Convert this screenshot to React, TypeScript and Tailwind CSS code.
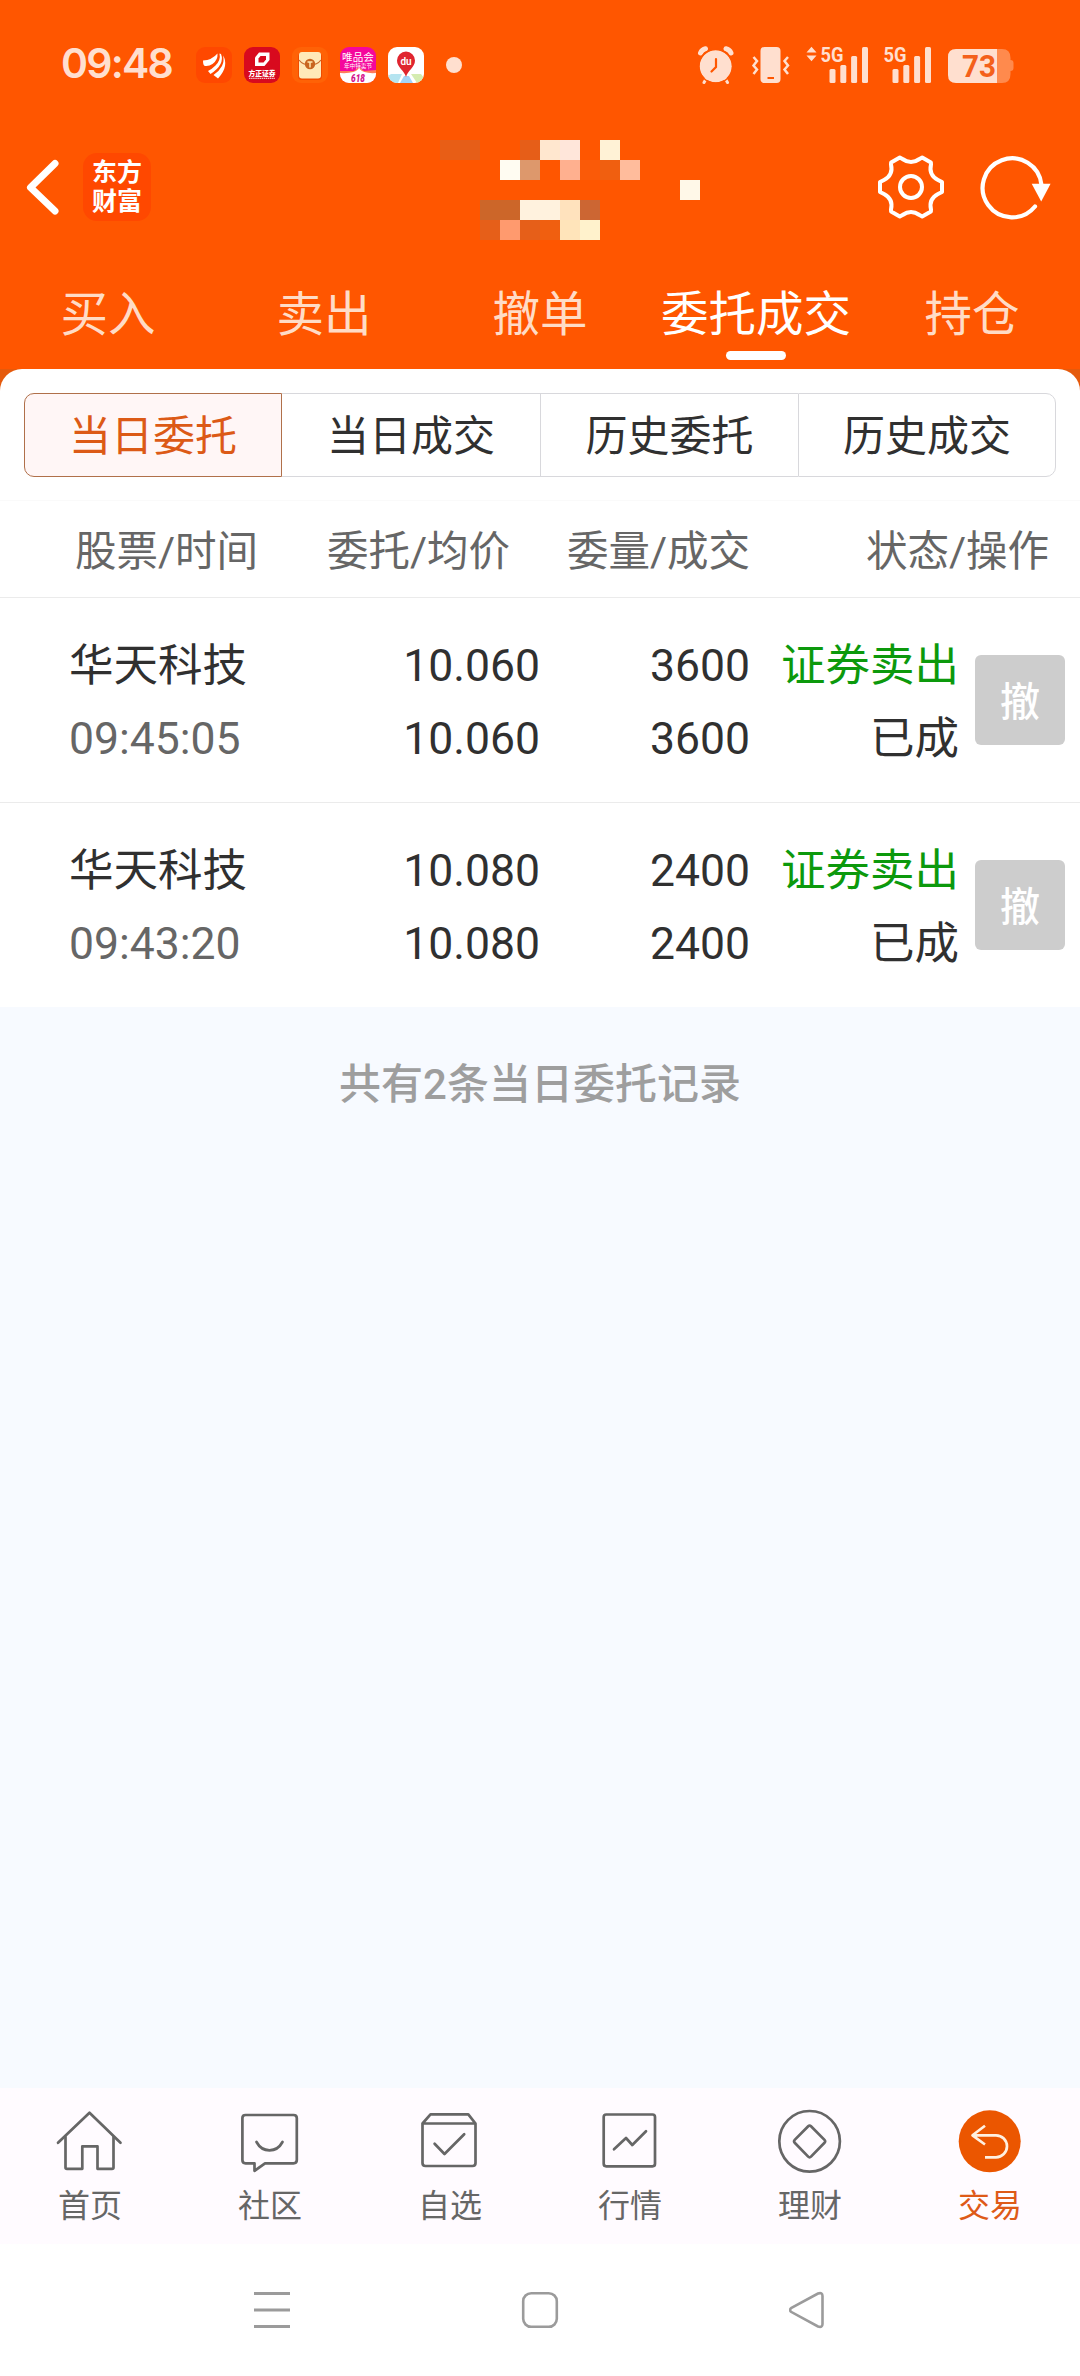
import React from "react";

const TABS = ["买入", "卖出", "撤单", "委托成交", "持仓"];
const SEGMENTS = ["当日委托", "当日成交", "历史委托", "历史成交"];

type Order = {
  name: string;
  time: string;
  price: string;
  avgPrice: string;
  amount: string;
  filled: string;
  side: string;
  status: string;
};

const ORDERS: Order[] = [
  {
    name: "华天科技",
    time: "09:45:05",
    price: "10.060",
    avgPrice: "10.060",
    amount: "3600",
    filled: "3600",
    side: "证券卖出",
    status: "已成",
  },
  {
    name: "华天科技",
    time: "09:43:20",
    price: "10.080",
    avgPrice: "10.080",
    amount: "2400",
    filled: "2400",
    side: "证券卖出",
    status: "已成",
  },
];

// Hidden account name, 13 x 5 blocks. Empty string = transparent
const _ = "";
const MASK = [
  "#e85e16", "#e65e18", _, _, "#e65e18", "#ffe7cf", "#ffe6da", _, "#fff2d6", _, _, _, _,
  _, _, _, "#fffcf2", "#dd986c", _, "#ffb08f", "#fa5a08", "#f05f10", "#ffbc9c", _, _, _,
  _, _, _, _, _, _, _, _, _, _, _, _, "#fff8e8",
  _, _, "#cc6629", "#cc6629", "#fff2de", "#fff2de", "#ffe2bd", "#cc6633", _, _, _, _, _,
  _, _, "#e65f19", "#ff9a6e", "#e65f19", "#f05f10", "#ffe4ba", "#fff2cc", _, _, _, _, _,
];

function AppIcons() {
  return (
    <div className="flex gap-3">
      <svg width="36" height="36" viewBox="0 0 36 36">
        <rect width="36" height="36" rx="9" fill="#ff4800" />
        <path d="M7 13.500Q16 13 21.500 6.500Q22 13 16.500 17Q13 19.500 9 19Q7 18.500 7 13.500Z" fill="#fff" />
        <path d="M23.500 6.500Q25 13 19.500 18.500Q16 22 12 24L14.500 27Q22 22 24.500 17Q27 12 25 7Z" fill="#fff" />
        <path d="M27 8.500Q28.500 14 26 19Q23 24.500 17.500 28L22 31.500Q28 25 29 19Q30 13 27 8.500Z" fill="#fff" />
      </svg>
      <svg width="36" height="36" viewBox="0 0 36 36">
        <rect width="36" height="36" rx="9" fill="#d80a1e" />
        <path d="M15 5.500H25.500V13L20.500 19H11V10.500Z" fill="#fff" />
        <path d="M16.500 9H22V12.500L19.500 15.500H14.500V11.500Z" fill="#d80a1e" />
        <text x="18" y="28.600" textAnchor="middle" fontSize="6.800" fontWeight="900" fill="#fff">方正证券</text>
        <path d="M5 31.300H31" stroke="#fff" strokeWidth="1.200" strokeDasharray="1.500 .6" opacity=".75" />
      </svg>
      <svg width="36" height="36" viewBox="0 0 36 36">
        <rect width="36" height="36" rx="9" fill="#ff6206" />
        <rect x="6" y="6" width="24" height="27" rx="4" fill="#f04c00" />
        <rect x="7" y="5" width="22" height="26.500" rx="3" fill="#ffe9b8" />
        <path d="M7 13C10 17 14 18 18 18S26 17 29 13" fill="none" stroke="#c96a2a" strokeWidth="1.200" />
        <circle cx="18" cy="17" r="5.200" fill="#c9651f" />
        <path d="M15.500 15H20.500M18 15V20.500" stroke="#ffe7ad" strokeWidth="1.500" />
      </svg>
      <svg width="36" height="36" viewBox="0 0 36 36">
        <defs>
          <clipPath id="vip"><rect width="36" height="36" rx="9" /></clipPath>
        </defs>
        <g clipPath="url(#vip)">
          <rect width="36" height="36" fill="#f5079c" />
          <path d="M0 24L14 24L19 20L24 24L36 23V36H0Z" fill="#ff7a5a" />
          <path d="M0 26Q14 27 19 21.500Q24 27 36 26V36H0Z" fill="#fff" />
        </g>
        <text x="18" y="14.200" textAnchor="middle" fontSize="10.600" fill="#fff">唯品会</text>
        <text x="18" y="20.800" textAnchor="middle" fontSize="5.600" fill="#fff">年中特卖节</text>
        <text x="18" y="34.500" textAnchor="middle" fontSize="10" fontWeight="900" fontStyle="italic" fontFamily="Roboto" textLength="14" lengthAdjust="spacingAndGlyphs" fill="#d4148c">618</text>
      </svg>
      <svg width="36" height="36" viewBox="0 0 36 36">
        <defs>
          <clipPath id="map"><rect width="36" height="36" rx="9" /></clipPath>
        </defs>
        <g clipPath="url(#map)">
          <rect width="36" height="36" fill="#fff" />
          <path d="M3 27L14 27L10 36H0V29Z" fill="#b5e4f0" />
          <path d="M16 29H21L25 36H12Z" fill="#a3d4f7" />
          <path d="M23 27H33L36 31V36H29Z" fill="#d5ecb0" />
        </g>
        <path d="M18 30C16.500 23.500 9 20.500 9 13.500A9 9 0 0 1 27 13.500C27 20.500 19.500 23.500 18 30Z" fill="#e0252f" />
        <text x="18" y="17.500" textAnchor="middle" fontSize="10" fontWeight="600" fill="#fff">du</text>
      </svg>
    </div>
  );
}

function Signal({ roaming }: { roaming?: boolean }) {
  return (
    <svg width={roaming ? 63 : 49} height="42" viewBox={roaming ? "-14 -4 63 42" : "0 -4 49 42"} fill="#ffdfcf">
      {roaming && <path d="M-13.500 6.500L-8.500 .8L-3.500 6.500ZM-13.500 9.500H-3.500L-8.500 15.200Z" />}
      <text x=".5" y="16" fontSize="21" fontWeight="700" textLength="23" lengthAdjust="spacingAndGlyphs" fontFamily="Roboto">
        5G
      </text>
      <rect x="9.500" y="23" width="6" height="14" rx="1.500" />
      <rect x="20.300" y="19" width="6" height="18" rx="1.500" />
      <rect x="31.100" y="10" width="6" height="27" rx="1.500" />
      <rect x="42" y="1" width="6" height="36" rx="1.500" />
    </svg>
  );
}

function StatusBar() {
  return (
    <div className="flex h-[130px] items-center pl-[61px]">
      <div className="w-[135px] pb-[3px] text-[41px] leading-none font-semibold tracking-[-1.8px] text-[#ffdfcf] font-['Inter']">09:48</div>
      <AppIcons />
      <div className="ml-[22px] h-4 w-4 rounded-full bg-[#ffdfcf]" />

      <div className="ml-[235px] flex items-end pb-[5px]">
        <svg width="38" height="38" viewBox="0 0 38 38">
          <g stroke="#ffdfcf" strokeLinecap="round" fill="none">
            <path d="M3.500 7Q5 3.500 8.500 2.800M34 7Q32.500 3.500 29 2.800" strokeWidth="5" />
            <path d="M9 33L7 36.500M28.500 33L30.500 36.500" strokeWidth="3" />
          </g>
          <circle cx="18.700" cy="20.300" r="16" fill="#ffdfcf" />
          <circle cx="18.700" cy="20.300" r="17" fill="none" stroke="#ff5600" strokeWidth="1.400" />
          <path d="M19 13V21L14.500 25.500" fill="none" stroke="#ff5600" strokeWidth="2.200" strokeLinecap="round" />
        </svg>
        <svg className="ml-[17px]" width="38" height="38" viewBox="0 0 38 38">
          <rect x="8.500" y="1" width="20" height="36" rx="4" fill="#ffdfcf" />
          <path d="M15.500 32H22" stroke="#ff5600" strokeWidth="2" />
          <path d="M1.500 11L5 15L1.500 19.500L5 23.500L1.500 28M36 11L32.500 15L36 19.500L32.500 23.500L36 28" fill="none" stroke="#ffdfcf" strokeWidth="2.500" />
        </svg>
        <div className="ml-[16px]">
          <Signal roaming />
        </div>
        <div className="ml-[14px]">
          <Signal />
        </div>
        <svg className="ml-[15px]" width="67" height="38" viewBox="0 0 67 38">
          <path d="M50 3H55Q63.500 3 63.500 12V14Q66.500 14 66.500 17V22Q66.500 25 63.500 25V28Q63.500 37 55 37H50Z" fill="#ff8a4d" />
          <path d="M50 3H9Q1 3 1 11V29Q1 37 9 37H50Z" fill="#ffdfcf" />
          <text x="15" y="31" fontSize="31" fontWeight="700" fill="#f4601a" textLength="34" lengthAdjust="spacingAndGlyphs" fontFamily="Roboto">
            73
          </text>
        </svg>
      </div>
    </div>
  );
}

function Header() {
  return (
    <div className="flex h-[120px] items-start pt-[10px]">
      <svg className="mt-[14px] ml-[22px]" width="42" height="66" viewBox="0 0 42 66" fill="none">
        <path d="M33 9.500L8.500 33.500L33 57" stroke="#fff" strokeWidth="7" strokeLinecap="round" strokeLinejoin="round" />
      </svg>
      <div className="mt-[13px] ml-[19px] flex h-[68px] w-[68px] flex-col items-center justify-center rounded-[14px] bg-[#ff4800] text-[25px] leading-[29px] font-bold text-white">
        <span>东方</span>
        <span>财富</span>
      </div>
      <div className="ml-[289px] grid auto-rows-[20px] grid-cols-[repeat(13,20px)]">
        {MASK.map((color, i) => (
          <div key={i} style={{ backgroundColor: color || undefined }} />
        ))}
      </div>
      <svg className="mt-[11px] ml-[175px]" width="72" height="72" viewBox="-36 -36 72 72" fill="none" stroke="#fff" strokeWidth="4" strokeLinejoin="round">
        <path d="M31 -5L31 5L27 7Q17.500 12 20 22.500L19.900 24.500L11.200 29.500L8.500 28Q0 22 -8.500 28L-11.200 29.500L-19.900 24.500L-20 22.500Q-17.500 12 -27 7L-31 5L-31 -5L-27 -7Q-17.500 -12 -20 -22.500L-19.900 -24.500L-11.200 -29.500L-8.500 -28Q0 -22 8.500 -28L11.200 -29.500L19.900 -24.500L20 -22.500Q17.500 -12 27 -7Z" />
        <circle r="11" />
      </svg>
      <svg className="mt-[11px] ml-[29px]" width="76" height="72" viewBox="-36 -36 76 72" fill="none">
        <path d="M29.500 -2A29.500 29.500 0 1 0 23 19.500" stroke="#fff" strokeWidth="4.200" strokeLinecap="round" />
        <path d="M19.700 -3.300H38.600L29.200 14.500Z" fill="#fff" />
      </svg>
    </div>
  );
}

function OrderRow({ order }: { order: Order }) {
  return (
    <div className="flex h-[205px] items-center border-b border-[#ebebeb] text-[44.5px] leading-[73px] text-[#303030]">
      <div className="w-[240px] pt-[5px] pl-[69px]">
        <div className="whitespace-nowrap">{order.name}</div>
        <div className="text-[#666]">{order.time}</div>
      </div>
      <div className="w-[300px] pt-[5px] text-right">
        <div>{order.price}</div>
        <div>{order.avgPrice}</div>
      </div>
      <div className="w-[210px] pt-[5px] text-right">
        <div>{order.amount}</div>
        <div>{order.filled}</div>
      </div>
      <div className="w-[209px] pt-[5px] text-right">
        <div className="text-[#0c990c]">{order.side}</div>
        <div>{order.status}</div>
      </div>
      <button className="ml-4 h-[90px] w-[90px] rounded-md bg-[#cdcdcd] pt-[5px] text-[40px] leading-[85px] font-medium text-white">撤</button>
    </div>
  );
}

const NAV = [
  {
    label: "首页",
    icon: (
      <>
        <path d="M4 36.700L35.500 6.700L66.500 36.700" />
        <path d="M11.500 31V61.500Q11.500 62.800 13 62.800H28.300V40.300H43.500V62.800H58Q59.500 62.800 59.500 61.500V31" />
      </>
    ),
  },
  {
    label: "社区",
    icon: (
      <>
        <path d="M11.500 9H59.500Q62.800 9 62.800 12V54Q62.800 57.300 59.500 57.300H31L20.500 64.800V57.300H11.500Q8.400 57.300 8.400 54V12Q8.400 9 11.500 9Z" />
        <path d="M22.500 36Q27 44.300 35.500 44.300T48.500 36" />
      </>
    ),
  },
  {
    label: "自选",
    icon: (
      <>
        <path d="M8.500 17.500H61.500V57Q61.500 60 58.500 60H11.500Q8.500 60 8.500 57ZL16.500 8.300H54.300L61.500 17.500" />
        <path d="M20.600 37.700L30.500 48L50.200 28.300" />
      </>
    ),
  },
  {
    label: "行情",
    icon: (
      <>
        <rect x="9.700" y="8.500" width="51.300" height="51.800" rx="2.500" />
        <path d="M20 43.300L32 32L38.300 39L52 25.300" />
      </>
    ),
  },
  {
    label: "理财",
    icon: (
      <>
        <circle cx="35.600" cy="35.300" r="30.300" />
        <path d="M34.200 20.200Q35.600 18.800 37 20.200L50.500 33.900Q51.900 35.300 50.500 36.700L37 50.600Q35.600 52 34.200 50.600L20.700 36.700Q19.300 35.300 20.700 33.900Z" />
      </>
    ),
  },
  {
    label: "交易",
    active: true,
    icon: (
      <>
        <circle cx="35.700" cy="35.300" r="31" fill="#eb5600" stroke="none" />
        <path d="M31 19.700L18.500 29.300L31 38.500M18.500 29.300H42A11 11 0 0 1 42 51.300H31" stroke="#fff0e0" strokeLinecap="butt" />
      </>
    ),
  },
];

function BottomNav() {
  return (
    <nav className="grid h-[156px] grid-cols-6 bg-[#fffbff] pt-[18px]">
      {NAV.map((item) => (
        <div key={item.label} className="flex flex-col items-center">
          <svg width="72" height="72" viewBox="0 0 72 72" fill="none" stroke="#666" strokeWidth="2.700" strokeLinecap="round" strokeLinejoin="round">
            {item.icon}
          </svg>
          <span className={item.active ? "mt-2 text-[32px] leading-10 text-[#de5a18]" : "mt-2 text-[32px] leading-10 text-[#666]"}>
            {item.label}
          </span>
        </div>
      ))}
    </nav>
  );
}

function SystemNav() {
  return (
    <div className="flex h-[132px] items-center gap-[230px] bg-white pl-[253px]">
      <svg width="38" height="38" viewBox="0 0 38 38">
        <path d="M1 2.500H37M1 19H37M1 35.500H37" stroke="#9b9b9b" strokeWidth="3.200" />
      </svg>
      <svg width="38" height="38" viewBox="0 0 38 38" fill="none">
        <rect x="2.200" y="2.200" width="33.600" height="33.600" rx="8" stroke="#9b9b9b" strokeWidth="2.600" />
      </svg>
      <svg width="38" height="38" viewBox="0 0 38 38" fill="none">
        <path d="M2 17.200L29 2.500Q33.500 1 33.500 5V33Q33.500 37 29 35.500L2 20.800Q0 19 2 17.200Z" stroke="#9b9b9b" strokeWidth="2.600" />
      </svg>
    </div>
  );
}

export default function App() {
  return (
    <div className="flex h-[2376px] w-[1080px] flex-col overflow-hidden bg-[#f7faff] font-[Roboto,'Noto_Sans_CJK_SC',sans-serif]">
      <div className="h-[369px] shrink-0 bg-[#ff5600]">
        <StatusBar />
        <Header />
        <div className="grid h-[119px] grid-cols-5 pt-[33px]">
          {TABS.map((tab) => (
            <div
              key={tab}
              className={
                tab === "委托成交"
                  ? "flex flex-col items-center text-[47.5px] leading-[64px] text-white"
                  : "flex flex-col items-center text-[47.5px] leading-[64px] text-[#ffdcc6]"
              }
            >
              <span className="whitespace-nowrap">{tab}</span>
              {tab === "委托成交" && <div className="mt-1 h-[9px] w-[60px] rounded-full bg-white" />}
            </div>
          ))}
        </div>
      </div>

      <div className="shrink-0 bg-[#e55a0c]">
        <div className="rounded-t-[22px] bg-white pt-6">
          <div className="mx-6 grid h-[84px] grid-cols-4">
            {SEGMENTS.map((seg, i) => (
              <div
                key={seg}
                className={
                  i === 0
                    ? "rounded-l-[10px] border border-[#b0704a] bg-[#fff6f6] pt-[4px] text-center text-[42px] leading-[78px] text-[#dc5a16]"
                    : i === 3
                      ? "rounded-r-[10px] border border-[#d8d8dc] pt-[4px] text-center text-[42px] leading-[78px] text-[#303030]"
                      : "border-y border-[#d8d8dc] pt-[4px] text-center text-[42px] leading-[78px] text-[#303030] nth-3:border-l"
                }
              >
                {seg}
              </div>
            ))}
          </div>

          <div className="mt-[23px] flex h-[98px] items-center border-y border-t-[#fafafa] border-b-[#ebebeb] pt-[6px] text-[41.5px] whitespace-nowrap text-[#666]">
            <div className="w-[258px] text-right">股票/时间</div>
            <div className="w-[252px] text-right">委托/均价</div>
            <div className="w-[240px] text-right">委量/成交</div>
            <div className="w-[299px] text-right">状态/操作</div>
          </div>
        </div>
      </div>

      <div className="h-[409px] shrink-0 overflow-hidden bg-white">
        {ORDERS.map((order) => (
          <OrderRow key={order.time} order={order} />
        ))}
      </div>

      <div className="flex-1 pt-12 text-center text-[42px] leading-[60px] font-medium text-[#9e9e9e]">共有2条当日委托记录</div>

      <BottomNav />
      <SystemNav />
    </div>
  );
}
